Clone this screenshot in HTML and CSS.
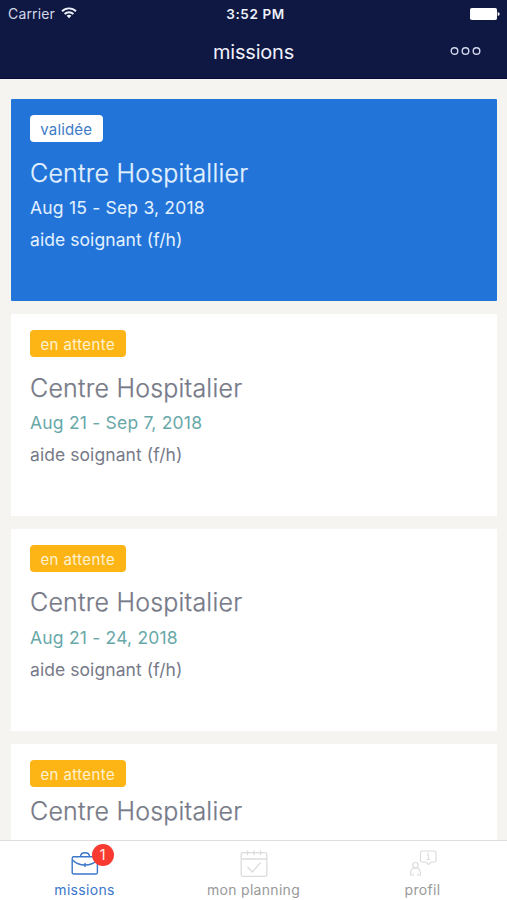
FILE: index.html
```html
<!DOCTYPE html>
<html lang="fr">
<head>
<meta charset="utf-8">
<title>missions</title>
<link rel="stylesheet" href="styles.css">
</head>
<body>
<div class="app">
  <header class="header">
    <div class="status">
      <div class="carrier"><span>Carrier</span>
        <svg class="wifi" width="16" height="12" viewBox="0 0 16 12" fill="none" stroke="#eef0fa" stroke-width="1.9"><path d="M1 4.2a10 10 0 0 1 14 0M3.6 7a6.3 6.3 0 0 1 8.8 0"/><path d="M8 11.3 5.6 8.8a3.6 3.6 0 0 1 4.8 0z" fill="#eef0fa" stroke="none"/></svg>
      </div>
      <span class="time">3:52 PM</span>
      <svg class="battery" width="31" height="12" viewBox="0 0 31 12" fill="#fff"><rect x="1" width="27" height="12" rx="1.8"/><path d="M28.7 4q2 .3 2 2t-2 2z"/></svg>
    </div>
    <div class="navbar">
      <h1 class="screen-title">missions</h1>
      <svg class="more" width="32" height="10" viewBox="0 0 32 10" fill="none" stroke="#d3d7ec" stroke-width="1.4"><circle cx="4.5" cy="5" r="3.3"/><circle cx="15.5" cy="5" r="3.3"/><circle cx="26.5" cy="5" r="3.3"/></svg>
    </div>
  </header>
  <main class="list">
    <article class="card confirmed">
      <span class="tag">validée</span>
      <h2 class="place">Centre Hospitallier</h2>
      <p class="date">Aug 15 - Sep 3, 2018</p>
      <p class="role">aide soignant (f/h)</p>
    </article>
    <article class="card">
      <span class="tag">en attente</span>
      <h2 class="place">Centre Hospitalier</h2>
      <p class="date">Aug 21 - Sep 7, 2018</p>
      <p class="role">aide soignant (f/h)</p>
    </article>
    <article class="card raised">
      <span class="tag">en attente</span>
      <h2 class="place">Centre Hospitalier</h2>
      <p class="date">Aug 21 - 24, 2018</p>
      <p class="role">aide soignant (f/h)</p>
    </article>
    <article class="card tight">
      <span class="tag">en attente</span>
      <h2 class="place">Centre Hospitalier</h2>
    </article>
  </main>
  <nav class="tabs">
    <a class="tab active">
      <span class="icon">
        <svg width="28" height="28" viewBox="0 0 28 28" fill="none" stroke="#3b76c9" stroke-width="1.4"><rect x="1.2" y="6.7" width="25.2" height="17.3" rx="1.6"/><path d="M9.5 6.5c.3-5 8.7-5 9 0M1.5 10c3.500 3.500 8 5 12.500 5s9-1.500 12.500-5M14 13v4"/></svg>
        <span class="count">1</span>
      </span>
      <span class="label">missions</span>
    </a>
    <a class="tab">
      <span class="icon">
        <svg width="28" height="28" viewBox="0 0 28 28" fill="none" stroke="#dcdcdc" stroke-width="1.3"><rect x="1.2" y="2.7" width="25.6" height="23.600" rx="1.5"/><path d="M1.2 9h25.6M7.5.5v4.5M14 .5v4.5M20.5.5v4.5M7.500 17l5 5 8-9.500"/></svg>
      </span>
      <span class="label">mon planning</span>
    </a>
    <a class="tab">
      <span class="icon">
        <svg width="28" height="28" viewBox="0 0 28 28" fill="none" stroke="#dcdcdc" stroke-width="1.2"><path d="M13 1h12.500q1.500 0 1.500 1.500v8q0 1.500-1.500 1.500h-3l-3 2.500-3-2.500H13q-1.500 0-1.500-1.500v-8Q11.500 1 13 1zM18 5h1.300v4.500M17.500 9.500h3.500M19.300 2.700v1.200"/><circle cx="6.500" cy="15.200" r="2.700"/><path d="M1.700 26v-3.500q0-4.500 4.800-4.500t4.800 4.500V26M4 26v-2.500M9 26v-2.500"/></svg>
      </span>
      <span class="label">profil</span>
    </a>
  </nav>
</div>
</body>
</html>
```
FILE: styles.css
```css
* { box-sizing: border-box; }
body { margin: 0; background: #f5f4f0; font-family: Inter, "Liberation Sans", sans-serif; }
h1, h2, p { margin: 0; font-weight: 400; white-space: nowrap; }
svg { display: block; }
.app { height: 900px; display: flex; flex-direction: column; overflow: hidden; }
.header { flex: none; height: 79px; background: #0e1842; color: #eef0fa; border-bottom: 1px solid #050d38; }
.status { height: 26px; padding: 2px 7px 0 8px; display: grid; grid-template-columns: 1fr auto 1fr; align-items: center; font-size: 14px; line-height: 24px; }
.carrier { display: flex; align-items: center; gap: 6px; color: #d5d9ea; letter-spacing: .15px; }
.wifi { margin-top: -2px; }
.time { margin-left: 3px; font-weight: 600; font-size: 13.5px; letter-spacing: .6px; }
.battery { justify-self: end; margin-top: -1px; }
.navbar { height: 52px; padding: 0 25px 0 57px; display: grid; grid-template-columns: 1fr 32px; align-items: center; }
.screen-title { text-align: center; font-size: 20px; letter-spacing: -.2px; line-height: 53px; }
.more { margin-top: -3px; }
.list { flex: 1; min-height: 0; overflow: hidden; padding: 19.5px 10px 0 10.5px; display: flex; flex-direction: column; gap: 12.5px; }
.card { flex: none; height: 202.6px; padding: 16.5px 20px 0 19.5px; background: #fff; color: #777a88; }
.confirmed { background: #2274d9; color: #e2f1ff; border-radius: 1px; }
.tag { display: block; width: 95.5px; height: 26.5px; border-radius: 4px; background: #fdb515; color: #fff2d0; text-align: center; font-size: 15px; letter-spacing: .4px; line-height: 29px; }
.confirmed .tag { width: 72.5px; background: #fff; color: #3e7bc6; letter-spacing: .15px; }
.place { margin-top: 14.5px; font-size: 25px; letter-spacing: .21px; line-height: 34px; font-weight: 300; -webkit-text-stroke: .25px currentColor; }
.date { margin-top: 2px; font-size: 17.5px; letter-spacing: .2px; line-height: 32px; color: #68a8a9; }
.role { font-size: 17.5px; letter-spacing: .07px; line-height: 32px; }
.confirmed .date { color: #e2f1ff; }
.raised .place { margin-top: 13.5px; margin-bottom: 3px; }
.tight .place { margin-top: 7px; }
.tabs { flex: none; height: 60px; border-top: 1px solid #ddd; background: #fff; display: grid; grid-template-columns: repeat(3, 1fr); }
.tab { display: flex; flex-direction: column; align-items: center; padding-top: 9px; color: #999; }
.icon { position: relative; width: 28px; height: 28px; }
.label { margin-top: 2px; font-size: 14px; letter-spacing: .3px; line-height: 20px; }
.active { color: #3b76c9; }
.count { position: absolute; left: 21px; top: -6px; width: 22px; height: 22px; border-radius: 50%; background: #f83a30; color: #ffe8e4; text-align: center; font-size: 15px; line-height: 22px; }
```
